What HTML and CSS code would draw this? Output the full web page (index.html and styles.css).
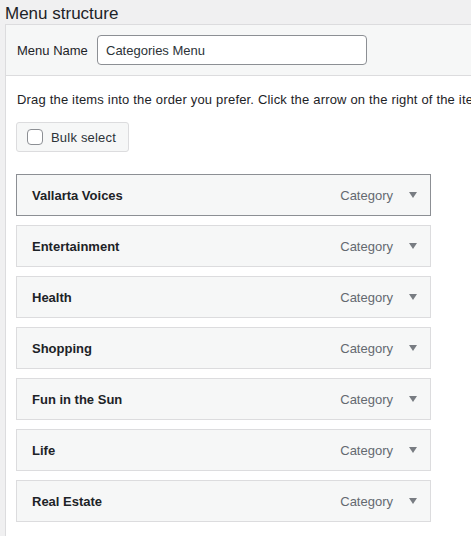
FILE: index.html
```html
<!DOCTYPE html>
<html>
<head>
    <title>Menu structure</title>
    <link rel="stylesheet" href="styles.css">
</head>
<body>
    <h2 class="menu-title">Menu structure</h2>

    <div class="menu-panel">
        <div class="panel-header">
            <label class="name-label" for="menuName">Menu Name</label>
            <input class="name-input" id="menuName" type="text" value="Categories Menu">
        </div>

        <div class="panel-body">
            <p class="drag-hint">Drag the items into the order you prefer. Click the arrow on the right of the item to reveal additional configuration options.</p>

            <label class="bulk-button">
                <span class="bulk-check"></span>
                Bulk select
            </label>

            <ul class="menu-items" id="menuItems">
                <!-- items rendered below -->
            </ul>
        </div>
    </div>

    <script>
        // Menu items - normally loaded from the saved menu
        const items = [
            'Vallarta Voices',
            'Entertainment',
            'Health',
            'Shopping',
            'Fun in the Sun',
            'Life',
            'Real Estate'
        ];

        function renderItems() {
            const list = document.getElementById('menuItems');
            list.innerHTML = '';

            items.forEach((title, index) => {
                const li = document.createElement('li');
                li.className = 'menu-item' + (index === 0 ? ' active' : '');
                li.innerHTML = `
                    <span class="item-title">${title}</span>
                    <span class="item-controls">
                        <span class="item-type">Category</span>
                        <span class="item-toggle"></span>
                    </span>
                `;
                list.appendChild(li);
            });
        }

        renderItems();
    </script>
</body>
</html>
```

FILE: styles.css
```css
body {
    margin: 0;
    background-color: #f0f0f1;
    color: #1d2327;
    font-family: "Liberation Sans", Arial, sans-serif;
    font-size: 13px;
    overflow: hidden;
}

.menu-title {
    margin: 0;
    padding: 3px 5px 0;
    height: 21px;
    font-size: 17px;
    font-weight: 400;
    line-height: 22px;
}

.menu-panel {
    margin-left: 5px;
    width: 520px;
    height: 600px;
    background-color: #fff;
    border: 1px solid #dcdcde;
}

/* Header with the menu name */
.panel-header {
    display: flex;
    align-items: center;
    padding: 10px 11px;
    background-color: #f6f7f7;
    border-bottom: 1px solid #dcdcde;
}

.name-label {
    width: 80px;
}

.name-input {
    box-sizing: border-box;
    width: 270px;
    height: 30px;
    padding: 0 8px;
    border: 1px solid #8c8f94;
    border-radius: 4px;
    font-family: inherit;
    font-size: 13px;
    color: #2c3338;
}

.panel-body {
    padding: 14px 10px 0;
}

.drag-hint {
    margin: 0 0 12px 1px;
    line-height: 20px;
    letter-spacing: 0.18px;
    white-space: nowrap;
    color: #1d2327;
}

/* Bulk select toggle */
.bulk-button {
    display: flex;
    align-items: center;
    gap: 8px;
    box-sizing: border-box;
    width: fit-content;
    height: 30px;
    padding: 0 12px 0 10px;
    background-color: #f6f7f7;
    border: 1px solid #dcdcde;
    border-radius: 3px;
    color: #2c3338;
    letter-spacing: 0.2px;
    cursor: pointer;
}

.bulk-check {
    box-sizing: border-box;
    width: 16px;
    height: 16px;
    border: 1px solid #8c8f94;
    border-radius: 4px;
    background-color: #fff;
}

/* Menu item bars */
.menu-items {
    list-style: none;
    margin: 0;
    padding: 13px 0 0;
}

.menu-item {
    display: flex;
    align-items: center;
    justify-content: space-between;
    box-sizing: border-box;
    width: 415px;
    height: 42px;
    margin-bottom: 9px;
    padding: 0 13px 0 15px;
    background-color: #f6f7f7;
    border: 1px solid #dcdcde;
}

.menu-items .menu-item:first-child {
    margin-top: 9px;
}

.menu-item.active {
    border-color: #8c8f94;
}

.item-title {
    font-weight: 700;
    color: #1d2327;
}

.item-controls {
    display: flex;
    align-items: center;
    gap: 16px;
}

.item-type {
    color: #646970;
}

.item-toggle {
    width: 0;
    height: 0;
    border-left: 4px solid transparent;
    border-right: 4px solid transparent;
    border-top: 6px solid #787c82;
}
```
